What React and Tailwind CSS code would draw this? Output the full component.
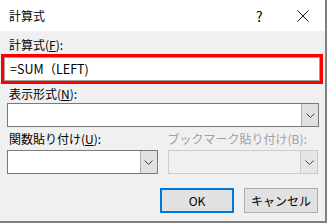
import React from 'react';

const font = { fontFamily: '"Noto Sans CJK JP", "Noto Sans", sans-serif' };

const Chevron = () => (
  <svg width="9" height="5" viewBox="0 0 9 5" fill="none">
    <path d="M0.5 0.5 L4.5 4.5 L8.5 0.5" stroke="#444" strokeWidth="1" />
  </svg>
);

const Combo = ({ className, disabled }) => (
  <div
    className={`flex h-[24px] border ${disabled ? 'border-[#cccccc] bg-[#f0f0f0]' : 'border-[#7a7a7a] bg-white'} ${className}`}
  >
    <div className="flex-1" />
    <div
      className={`w-[17px] flex items-center justify-center border-l ${disabled ? 'border-[#cccccc] bg-[#e6e6e6]' : 'border-[#adadad] bg-[#e1e1e1]'}`}
    >
      <Chevron />
    </div>
  </div>
);

export default function App() {
  return (
    <div
      className="w-[327px] h-[223px] bg-[#f0f0f0] border-r-2 border-b-2 border-[#7f7f7f] text-[12px] leading-[16px] text-black overflow-hidden"
      style={font}
    >
      {/* title bar */}
      <div className="h-[31px] bg-white flex items-center pl-[9px]">
        <span className="flex-1">計算式</span>
        <span className="w-[14px] mr-[27px] text-[14px]">?</span>
        <svg width="12" height="12" viewBox="0 0 12 12" className="mr-[16px]">
          <path d="M0.5 0.5 L11.5 11.5 M11.5 0.5 L0.5 11.5" stroke="#111" strokeWidth="1" />
        </svg>
      </div>

      <div className="px-[7px]">
        <div className="mt-[6px] pl-[2px]">
          計算式(<span className="underline">F</span>):
        </div>
        <div className="-ml-[6px] mt-[1px] w-[322px] h-[30px] border-[3px] border-[#ff0000] bg-white">
          <div className="h-full border border-[#a0a0a0] bg-white pl-[5px] flex items-center text-[12.5px]">
            =SUM（LEFT)
          </div>
        </div>

        <div className="mt-[2px] pl-[2px]">
          表示形式(<span className="underline">N</span>):
        </div>
        <Combo className="mt-[1px] w-[312px]" />

        <div className="mt-[4px] flex gap-[10px]">
          <div className="w-[151px] pl-[2px]">
            関数貼り付け(<span className="underline">U</span>):
          </div>
          <div className="w-[151px] text-[#a0a0a0]">ブックマーク貼り付け(B):</div>
        </div>
        <div className="mt-[3px] flex gap-[10px]">
          <Combo className="w-[151px]" />
          <Combo className="w-[151px]" disabled />
        </div>

        <div className="mt-[14px] flex justify-end gap-[10px] w-[311px]">
          <button className="w-[74px] h-[25px] border-2 border-[#0078d7] bg-[#e1e1e1]">OK</button>
          <button className="w-[74px] h-[25px] border border-[#adadad] bg-[#e1e1e1]">キャンセル</button>
        </div>
      </div>
    </div>
  );
}
